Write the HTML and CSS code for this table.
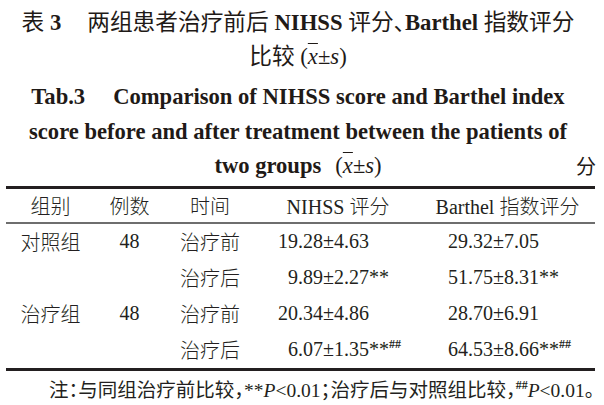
FILE: index.html
```html
<!DOCTYPE html>
<html lang="zh">
<head>
<meta charset="utf-8">
<link rel="stylesheet" href="styles.css">
</head>
<body>
<div class="page">
  <div class="title-cn">
    <div class="line">表 <b class="num">3</b><span class="gap"></span>两组患者治疗前后 <b class="lat">NIHSS</b> 评分<span class="halt">、</span><b class="lat">Barthel</b> 指数评分</div>
    <div class="line">比较 <span class="stat">(<i class="xbar">x</i>±<i>s</i>)</span></div>
  </div>
  <div class="title-en">
    <div class="line">Tab.3<span class="gap"></span>Comparison of NIHSS score and Barthel index</div>
    <div class="line">score before and after treatment between the patients of</div>
    <div class="line last"><span></span><span class="mid">two groups<span class="stat wide">(<i class="xbar">x</i>±<i>s</i>)</span></span><span class="unit">分</span></div>
  </div>
  <table class="data">
    <colgroup>
      <col class="c1"><col class="c2"><col class="c3"><col class="c4"><col class="c5">
    </colgroup>
    <thead>
      <tr><th>组别</th><th>例数</th><th>时间</th><th>NIHSS 评分</th><th>Barthel 指数评分</th></tr>
    </thead>
    <tbody>
      <tr><td>对照组</td><td>48</td><td>治疗前</td><td class="v">19.28±4.63</td><td class="v">29.32±7.05</td></tr>
      <tr><td></td><td></td><td>治疗后</td><td class="v"><span class="fig"></span>9.89±2.27**</td><td class="v">51.75±8.31**</td></tr>
      <tr><td>治疗组</td><td>48</td><td>治疗前</td><td class="v">20.34±4.86</td><td class="v">28.70±6.91</td></tr>
      <tr class="end"><td></td><td></td><td>治疗后</td><td class="v"><span class="fig"></span>6.07±1.35**<sup>##</sup></td><td class="v">64.53±8.66**<sup>##</sup></td></tr>
    </tbody>
  </table>
  <p class="note">注<span class="halt">：</span>与同组治疗前比较<span class="halt">，</span>**<i>P</i>&lt;0.01<span class="halt">；</span>治疗后与对照组比较<span class="halt">，</span><sup>##</sup><i>P</i>&lt;0.01。</p>
</div>
</body>
</html>
```

FILE: styles.css
```css
html, body {
  margin: 0;
  padding: 0;
  background: #ffffff;
}

body {
  font-family: "Liberation Serif", "Noto Sans CJK SC", serif;
  color: #231f20;
}

.page {
  width: 589px;
  padding: 6px 9px 0 6px;
}

.title-cn {
  font-family: "Liberation Serif", "Noto Sans CJK SC", serif;
  font-size: 22.7px;
  line-height: 34px;
  text-align: center;
  padding-right: 5px;
  color: #1f1a17;
}

.title-cn .num,
.title-cn .lat {
  font-weight: bold;
}

.gap {
  display: inline-block;
  width: 26px;
}

.halt {
  font-feature-settings: "halt";
}

.stat {
  font-weight: normal;
}

.stat.wide {
  margin-left: 14px;
}

.xbar {
  text-decoration: overline;
  text-decoration-thickness: 1px;
}

.title-en {
  margin-top: 6px;
  font-size: 22.6px;
  font-weight: bold;
  line-height: 34.5px;
  text-align: center;
  padding-right: 5px;
  color: #1f1a17;
}

.title-en .gap {
  width: 28px;
}

.title-en .last {
  display: grid;
  grid-template-columns: 1fr auto 1fr;
}

.title-en .unit {
  justify-self: end;
  font-family: "Noto Sans CJK SC", sans-serif;
  font-weight: normal;
  font-size: 20px;
  margin-right: -6px;
}

.data {
  margin-top: 2px;
  width: 589px;
  border-collapse: collapse;
  table-layout: fixed;
  font-size: 20px;
  border-top: 3px solid #231f20;
  border-bottom: 3px solid #231f20;
}

.c1 { width: 89px; }
.c2 { width: 69px; }
.c3 { width: 92px; }
.c4 { width: 164px; }
.c5 { width: 175px; }

.data th {
  font-weight: 300;
  height: 33px;
  padding: 0;
  text-align: center;
  vertical-align: middle;
  border-bottom: 2px solid #6e6e6e;
  white-space: nowrap;
}

.data td {
  font-weight: 300;
  height: 36px;
  padding: 0;
  text-align: center;
  vertical-align: middle;
  white-space: nowrap;
}

.data td.v {
  text-align: left;
}

.data td.v:nth-child(4) {
  padding-left: 22px;
}

.data td.v:nth-child(5) {
  padding-left: 28px;
}

.fig {
  display: inline-block;
  width: 10px;
}

sup {
  font-size: 12px;
  font-weight: bold;
  line-height: 0;
  vertical-align: 8px;
}

.note {
  margin: 8px 0 0;
  padding-left: 43px;
  font-size: 19.5px;
  line-height: 24px;
  white-space: nowrap;
}
```
